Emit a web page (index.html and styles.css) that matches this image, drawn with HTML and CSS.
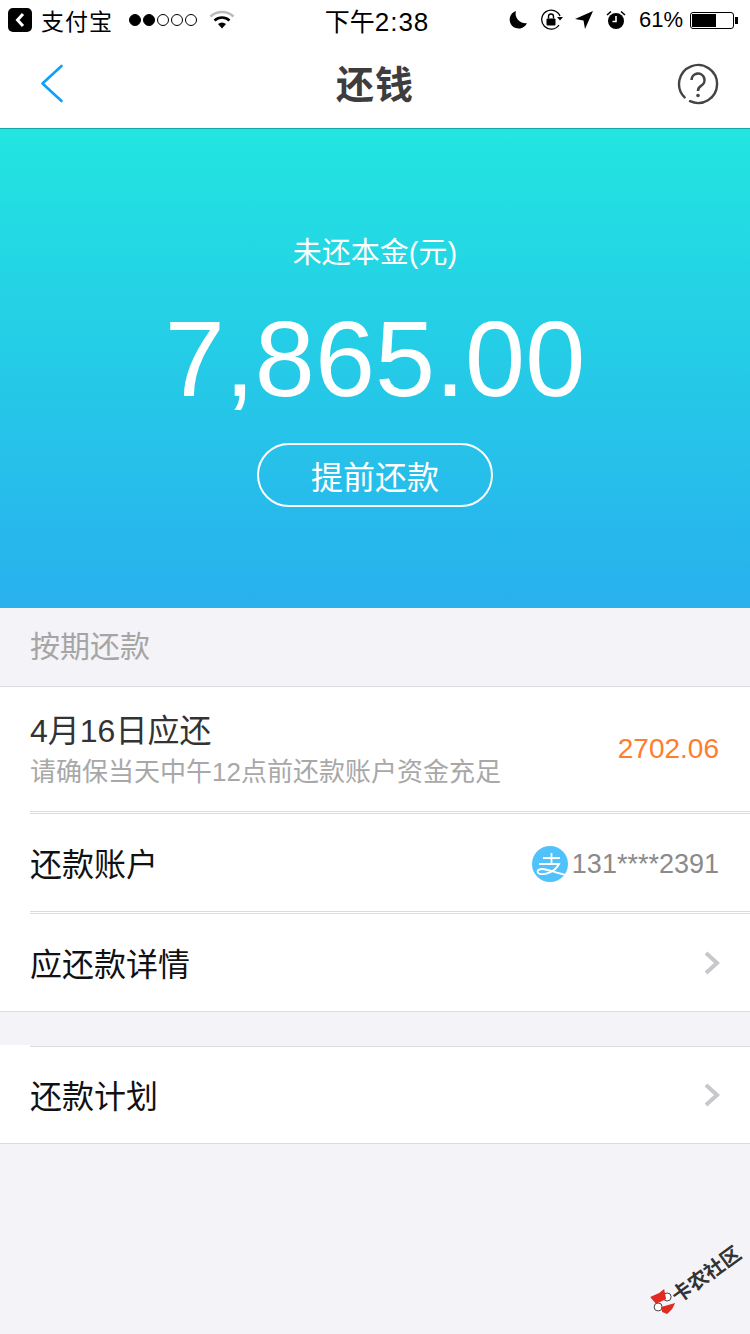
FILE: index.html
```html
<!DOCTYPE html>
<html lang="zh-CN">
<head>
  <meta charset="UTF-8" />
  <meta name="viewport" content="width=device-width, initial-scale=1.0"/>
  <title>还钱</title>
  <link rel="stylesheet" href="styles.css">
</head>
<body>

<div class="status-bar">
  <div class="status-left">
    <svg class="back-app" width="24" height="24" viewBox="0 0 24 24">
      <rect width="24" height="24" rx="5" fill="#000"/>
      <path d="M15 6 L9.5 12 L15 18" fill="none" stroke="#fff" stroke-width="3"/>
    </svg>
    <span class="carrier">支付宝</span>
    <span class="signal">
      <i class="dot on"></i><i class="dot on"></i><i class="dot"></i><i class="dot"></i><i class="dot"></i>
    </span>
    <svg class="wifi" width="26" height="20" viewBox="0 0 26 20">
      <path d="M1.5 6.5 C8 0.5 18 0.5 24.5 6.5" fill="none" stroke="#bbb" stroke-width="2.6"/>
      <path d="M5.5 10.5 C10 6.5 16 6.5 20.5 10.5" fill="none" stroke="#000" stroke-width="2.6"/>
      <path d="M9 14 C11.5 12 14.5 12 17 14 L13 18.5 Z" fill="#000"/>
    </svg>
  </div>
  <div class="status-time">下午<span class="time-digits">2:38</span></div>
  <div class="status-right">
    <svg width="20" height="20" viewBox="0 0 20 20">
      <path d="M8 1 A9 9 0 1 0 19 13 A9.5 9.5 0 0 1 8 1 Z" fill="#000"/>
    </svg>
    <svg class="lock-icon" width="24" height="22" viewBox="0 0 24 22">
      <path d="M20 7 A9.5 9.5 0 1 0 19 16" fill="none" stroke="#000" stroke-width="1.3"/>
      <path d="M17 8 L23 8 L20 11.5 Z" fill="#000"/>
      <rect x="6.5" y="9.5" width="9" height="7" rx="1" fill="#000"/>
      <path d="M8.5 9.5 V7.5 A2.5 2.5 0 0 1 13.5 7.5 V9.5" fill="none" stroke="#000" stroke-width="1.4"/>
    </svg>
    <svg width="20" height="20" viewBox="0 0 20 20">
      <path d="M19 1 L11 19 L9.5 10.5 L1 9 Z" fill="#000"/>
    </svg>
    <svg width="20" height="20" viewBox="0 0 20 20">
      <circle cx="10" cy="11" r="8" fill="#000"/>
      <path d="M10 6 V11.5 H6.5" fill="none" stroke="#fff" stroke-width="1.6"/>
      <path d="M1 5 L5 1.5 M19 5 L15 1.5" stroke="#000" stroke-width="1.6"/>
    </svg>
    <span class="battery-text">61%</span>
    <span class="battery"><span class="battery-level"></span></span>
  </div>
</div>

<div class="nav-bar">
  <div class="nav-side">
    <svg class="nav-back" width="24" height="40" viewBox="0 0 24 40">
      <path d="M21.5 2 L2.5 19.5 L21.5 37" fill="none" stroke="#0f9ffb" stroke-width="2.6" stroke-linecap="round" stroke-linejoin="round"/>
    </svg>
  </div>
  <div class="nav-title">还钱</div>
  <div class="nav-side nav-side-right">
    <svg class="nav-help" width="42" height="42" viewBox="0 0 42 42">
      <path d="M7.6 34.4 A19 19 0 1 1 13 38.2" fill="none" stroke="#444" stroke-width="2.4" stroke-linecap="round"/>
      <path d="M14.5 17 A6.5 6.5 0 1 1 24 22.8 C22 24 21 25 21 28" fill="none" stroke="#444" stroke-width="2.6"/>
      <circle cx="21" cy="32.5" r="1.8" fill="#444"/>
    </svg>
  </div>
</div>

<div class="hero">
  <div class="hero-label">未还本金(元)</div>
  <div class="hero-amount">7,865.00</div>
  <div class="hero-btn">提前还款</div>
</div>

<div class="section-title">按期还款</div>

<div class="group">
  <div class="row row-due">
    <div class="due-text">
      <div class="due-title">4月16日应还</div>
      <div class="due-note">请确保当天中午12点前还款账户资金充足</div>
    </div>
    <div class="due-amount">2702.06</div>
  </div>
  <div class="row">
    <span class="row-name">还款账户</span>
    <div class="account">
      <svg width="36" height="36" viewBox="0 0 36 36">
        <circle cx="18" cy="18" r="18" fill="#4fc1fb"/>
        <path d="M11 12 H28 M19.5 7 V18 M7 18 H27 C23 26 13 29 8 28 C4 27 5 23 10 23 C16 23 24 27 35 29" fill="none" stroke="#fff" stroke-width="1.8"/>
      </svg>
      <span class="account-no">131****2391</span>
    </div>
  </div>
  <div class="row">
    <span class="row-name">应还款详情</span>
    <svg class="chevron" width="18" height="24" viewBox="0 0 18 24">
      <path d="M3 2 L14 12 L3 22" fill="none" stroke="#c7c7cc" stroke-width="4"/>
    </svg>
  </div>
</div>

<div class="group group-plan">
  <div class="row">
    <span class="row-name">还款计划</span>
    <svg class="chevron" width="18" height="24" viewBox="0 0 18 24">
      <path d="M3 2 L14 12 L3 22" fill="none" stroke="#c7c7cc" stroke-width="4"/>
    </svg>
  </div>
</div>

<div class="watermark">
  <svg class="watermark-logo" width="26" height="26" viewBox="0 0 26 26">
    <circle cx="17" cy="9" r="4" fill="#fff" stroke="#444"/>
    <circle cx="8" cy="19" r="4" fill="#fff" stroke="#444"/>
    <path d="M0 9 L9 5 L12 13 L6 16 Z M9 5 L14 1 L16 11 L12 13 Z M11 19 L25 15 L22 21 L17 26 L12 24 Z" fill="#e02a22"/>
  </svg>
  <span>卡农社区</span>
</div>

</body>
</html>
```

FILE: styles.css
```css
body {
  margin: 0;
  width: 750px;
  height: 1334px;
  overflow: hidden;
  position: relative;
  background: #f3f3f8;
  font-family: "Liberation Sans", "Noto Sans CJK SC", sans-serif;
}

.status-bar {
  height: 40px;
  background: white;
  display: flex;
  align-items: center;
  justify-content: space-between;
  padding: 0 16px 0 8px;
  color: #000;
  position: relative;
}

.status-left {
  display: flex;
  align-items: center;
  width: 300px;
}

.carrier {
  font-size: 23px;
  margin-left: 9px;
  letter-spacing: 1px;
}

.signal {
  display: flex;
  gap: 2px;
  margin-left: 16px;
}

.dot {
  display: block;
  width: 12px;
  height: 12px;
  border: 1px solid #000;
  border-radius: 50%;
  box-sizing: border-box;
}

.dot.on {
  background: #000;
}

.wifi {
  margin-left: 12px;
}

.status-time {
  position: absolute;
  left: 0;
  right: 0;
  padding-left: 4px;
  text-align: center;
  font-size: 25px;
}

.time-digits {
  font-size: 26px;
  letter-spacing: 1px;
}

.status-right {
  display: flex;
  align-items: center;
  gap: 12px;
}

.lock-icon {
  margin-right: -2px;
}

.battery-text {
  font-size: 22px;
  margin-left: 1px;
  margin-right: -5px;
}

.battery {
  width: 44px;
  height: 17px;
  border: 1px solid #000;
  border-radius: 3px;
  padding: 1px;
  box-sizing: border-box;
  position: relative;
}

.battery::after {
  content: "";
  position: absolute;
  right: -5px;
  top: 4px;
  width: 3px;
  height: 7px;
  background: #000;
}

.battery-level {
  display: block;
  width: 61%;
  height: 100%;
  background: #000;
}

.nav-bar {
  height: 88px;
  background: white;
  border-bottom: 1px solid #16a9a6;
  display: flex;
  align-items: center;
  padding: 0 31px 0 40px;
}

.nav-side {
  flex: 1;
  display: flex;
}

.nav-side-right {
  justify-content: flex-end;
}

.nav-title {
  font-size: 38px;
  font-weight: bold;
  color: #3d3d3d;
  letter-spacing: 1px;
  margin: 0 9px 6px 0;
}

.hero {
  height: 479px;
  background: linear-gradient(#22e5e0, #28b0ee);
  color: white;
  display: flex;
  flex-direction: column;
  align-items: center;
  padding-top: 103px;
  box-sizing: border-box;
}

.hero-label {
  font-size: 29px;
  line-height: 42px;
}

.hero-amount {
  font-size: 108px;
  line-height: 128px;
  margin-top: 21px;
}

.hero-btn {
  width: 236px;
  height: 64px;
  border: 2px solid white;
  border-radius: 32px;
  box-sizing: border-box;
  margin-top: 20px;
  font-size: 32px;
  display: flex;
  align-items: center;
  justify-content: center;
}

.section-title {
  height: 72px;
  padding: 0 0 6px 30px;
  font-size: 30px;
  color: #a5a5a5;
  display: flex;
  align-items: center;
}

.group {
  background: white;
  border-top: 1px solid #dcdcdf;
  border-bottom: 1px solid #dcdcdf;
}

.group-plan {
  margin-top: 34px;
  position: relative;
}

.group-plan::before {
  content: "";
  position: absolute;
  left: 0;
  top: -2px;
  width: 30px;
  height: 2px;
  background: white;
}

.group-plan .row {
  height: 96px;
}

.row {
  height: 97px;
  margin-left: 30px;
  padding-right: 30px;
  display: flex;
  align-items: center;
  justify-content: space-between;
  border-bottom: 3px double #dcdcdf;
}

.row:last-child {
  border-bottom: none;
}

.row-due {
  height: 124px;
}

.row-name {
  font-size: 32px;
  color: #111;
  padding-bottom: 2px;
}

.due-text {
  margin-top: 6px;
}

.due-title {
  font-size: 32px;
  color: #333;
  line-height: 40px;
}

.due-note {
  font-size: 26px;
  color: #a8a8a8;
  line-height: 42px;
}

.due-amount {
  font-size: 28px;
  color: #ff7d2e;
  margin-right: 1px;
}

.account {
  display: flex;
  align-items: center;
  gap: 4px;
  margin-right: 1px;
  padding-top: 3px;
}

.account-no {
  font-size: 27px;
  color: #8a8a8a;
}

.chevron {
  margin-right: -1px;
}

.watermark {
  position: absolute;
  left: 640px;
  top: 1267px;
  width: max-content;
  display: flex;
  align-items: center;
  gap: 2px;
  transform: rotate(-36deg);
  font-size: 20px;
  font-weight: bold;
  color: #333;
  white-space: nowrap;
}

.watermark-logo {
  transform: translate(4.6px, -2.9px) rotate(36deg);
}
```
